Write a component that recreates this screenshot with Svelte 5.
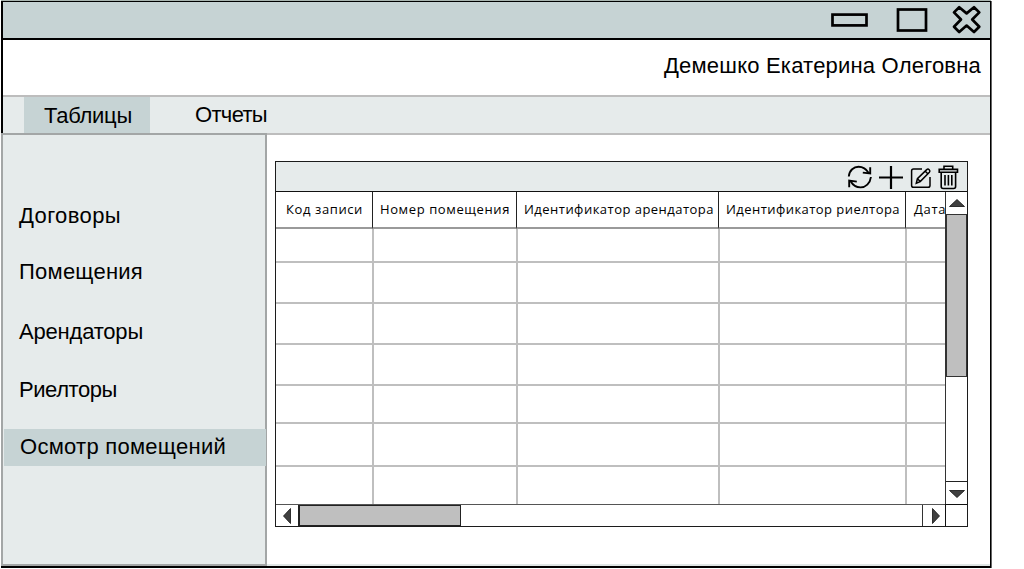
<script>
  const tabs = [
    { label: 'Таблицы', width: 88, active: true },
    { label: 'Отчеты', width: 72, active: false }
  ];

  const sections = [
    { label: 'Договоры', width: 102, height: 56 },
    { label: 'Помещения', width: 124, height: 60 },
    { label: 'Арендаторы', width: 124, height: 58 },
    { label: 'Риелторы', width: 98, height: 52 },
    { label: 'Осмотр помещений', width: 206, height: 37, active: true }
  ];

  const columns = [
    { label: 'Код записи', width: 77 },
    { label: 'Номер помещения', width: 130 },
    { label: 'Идентификатор арендатора', width: 190 },
    { label: 'Идентификатор риелтора', width: 174 },
    { label: 'Дата', width: 32 }
  ];

  const rows = [34, 41, 41, 41, 38, 43, 37];

  // Tracks a label out (or in) so that it takes up the given width.
  function fit(node, width) {
    const natural = node.getBoundingClientRect().width;
    const step = (width - natural) / node.textContent.length;
    node.style.letterSpacing = `${step}px`;
  }
</script>

<div class="window">
  <header class="titlebar">
    <svg class="win-icons" width="160" height="36" viewBox="0 0 160 36" fill="none" stroke="#000" stroke-width="2.7">
      <rect x="2.5" y="12.6" width="34" height="10.8" />
      <rect x="68" y="7.5" width="28" height="21" />
      <path
        stroke-linejoin="round"
        d="M129.2 5.2 L136.6 11.4 L144 5.2 L149.3 10.4 L142.2 17.5 L149.3 24.7 L144 30 L136.6 23.6 L129.2 30 L124 24.7 L131 17.5 L124 10.4 Z"
      />
    </svg>
  </header>

  <div class="user"><span use:fit={317}>Демешко Екатерина Олеговна</span></div>

  <nav class="tabs">
    {#each tabs as tab}
      <div class="tab" class:active={tab.active}><span use:fit={tab.width}>{tab.label}</span></div>
    {/each}
  </nav>

  <div class="body">
    <aside class="sidebar">
      {#each sections as item}
        <div class="item" class:active={item.active} style="height: {item.height}px">
          <span use:fit={item.width}>{item.label}</span>
        </div>
      {/each}
    </aside>

    <main class="content">
      <section class="panel">
        <div class="toolbar">
          <svg width="114" height="28" viewBox="0 0 114 28" fill="none" stroke="#000">
            <g stroke-width="1.9">
              <path d="M2.8 13.5 C3.3 7 8 3.8 12.5 3.8 C17 3.8 20.3 6 22.7 10" />
              <path d="M24.2 4.2 V10.4 L16.8 9.6" />
              <path d="M24.9 14 C24.2 20.5 19.5 24.4 14.5 24.4 C10.5 24.4 6.8 22 4.4 18" />
              <path d="M3.2 24.3 V17.6 L10.8 18.6" />
            </g>
            <path stroke-width="2.2" d="M33 14.5 H57 M45 3 V26" />
            <g stroke-width="1.5">
              <path d="M76 6 H67.5 Q65.6 6 65.6 8 V22.5 Q65.6 24.3 67.5 24.3 H82 Q84 24.3 84 22.5 V14" />
              <path d="M70.3 20.2 L71.4 15.7 L80.7 6.6 Q82 5.5 83.2 6.7 Q84.5 8 83.4 9.3 L74.2 18.6 Z M79.2 8.2 L81.8 10.8 M71.8 16 L74 18.2" />
            </g>
            <g stroke-width="1.6">
              <path d="M93.2 6.4 H111.5 V9.2 H93.2 Z M98 6.2 V3.2 H106.7 V6.2" />
              <path d="M95.2 9.3 V23.5 Q95.2 25.5 97.2 25.5 H107.6 Q109.6 25.5 109.6 23.5 V9.3" />
              <path d="M99 12 V22.5 M102.4 12 V22.5 M105.8 12 V22.5" />
            </g>
          </svg>
        </div>

        <div class="viewport">
          <div class="grid">
            {#each columns as column}
              <div class="cell head"><span use:fit={column.width}>{column.label}</span></div>
            {/each}
            {#each rows as height, i}
              {#each columns as _}
                <div class="cell" class:last={i === rows.length - 1} style="height: {height}px"></div>
              {/each}
            {/each}
          </div>

          <div class="vscroll">
            <div class="button"><svg width="16" height="8" viewBox="0 0 16 8"><path d="M0.5 7.5 L8 0.5 L15.5 7.5 Z" /></svg></div>
            <div class="thumb"></div>
            <div class="track"></div>
            <div class="button"><svg width="16" height="8" viewBox="0 0 16 8"><path d="M0.5 0.5 H15.5 L8 7.5 Z" /></svg></div>
          </div>

          <div class="hscroll">
            <div class="button"><svg width="8" height="16" viewBox="0 0 8 16"><path d="M7.5 0.5 V15.5 L0.5 8 Z" /></svg></div>
            <div class="thumb"></div>
            <div class="track"></div>
            <div class="button"><svg width="8" height="16" viewBox="0 0 8 16"><path d="M0.5 0.5 V15.5 L7.5 8 Z" /></svg></div>
          </div>
          <div class="corner"></div>
        </div>
      </section>
    </main>
  </div>
</div>

<style>
  :global(body) {
    margin: 0;
    background: #fff;
    overflow: hidden;
  }

  .window,
  .window * {
    box-sizing: border-box;
  }

  .window {
    display: flex;
    flex-direction: column;
    width: 990px;
    height: 567px;
    margin: 1px 0 0 1px;
    border: solid #000;
    border-width: 1px 1px 2px 2px;
    box-shadow: 1px 0 0 #666, 0 -1px 0 #a9b5b0;
    background: #fff;
    color: #000;
    font: 22px/26px 'Liberation Sans', Arial, sans-serif;
    white-space: nowrap;
  }

  .window span {
    display: inline-block;
  }

  svg {
    display: block;
    flex: none;
  }

  .titlebar {
    display: flex;
    justify-content: flex-end;
    flex: none;
    height: 38px;
    border-bottom: 2px solid #000;
    background: #c6d3d4;
  }

  .user {
    display: flex;
    justify-content: flex-end;
    flex: none;
    height: 55px;
    padding: 13px 9px 0 0;
  }

  .tabs {
    display: flex;
    flex: none;
    height: 40px;
    padding-left: 21px;
    border: solid #bdbdbd;
    border-width: 2px 0;
    background: #e6ebeb;
  }

  .tab {
    padding: 5px 0 0 45px;
  }

  .tab.active {
    width: 126px;
    padding: 6px 0 0 20px;
    background: #c6d3d4;
  }

  .body {
    display: flex;
    flex: 1;
    min-height: 0;
  }

  .sidebar {
    width: 266px;
    flex: none;
    margin: -2px 0 0 -2px;
    padding-top: 68px;
    border: 2px solid #a3a6a6;
    background: #e6ebeb;
    z-index: 1;
  }

  .item {
    padding: 0 0 0 16px;
  }

  .item.active {
    margin-right: -1px;
    margin-left: 1px;
    padding: 5px 0 0 16px;
    background: #c6d3d4;
  }

  .content {
    flex: 1;
    padding: 26px 0 0 8px;
    border-bottom: 2px solid #dfe6e5;
  }

  .panel {
    width: 693px;
    border: 1px solid #1c1c1c;
  }

  .toolbar {
    display: flex;
    justify-content: flex-end;
    height: 30px;
    padding: 1px 7px 0 0;
    border-bottom: 1px solid #111;
    background: #e6ebeb;
  }

  .viewport {
    display: grid;
    grid-template-columns: 669px 22px;
    grid-template-rows: 312px 22px;
  }

  .grid {
    display: grid;
    grid-template-columns: 98px 144px 202px 187px 100px;
    grid-template-rows: 37px repeat(7, auto);
    align-content: start;
    overflow: hidden;
  }

  .cell {
    border: solid #bfbfbf;
    border-width: 0 2px 2px 0;
  }

  .cell.last {
    border-bottom: 0;
  }

  .cell.head {
    margin-right: 1px;
    margin-left: -1px;
    padding: 8px 0 0 11px;
    border-right: 1px solid #222;
    border-bottom-color: #9a9a9a;
    font: 13px/18px 'Open Sans', 'Noto Sans', sans-serif;
  }

  .cell.head:nth-child(n + 2) {
    padding-left: 7px;
  }

  .cell.head:nth-child(5) {
    padding-left: 8px;
  }

  .vscroll {
    display: flex;
    flex-direction: column;
    border-left: 1px solid #333;
  }

  .hscroll {
    display: flex;
    border-top: 1px solid #555;
  }

  .button {
    display: flex;
    align-items: center;
    justify-content: center;
    flex: none;
    background: #fff;
  }

  .button path {
    fill: #404040;
    stroke: #111;
    stroke-width: 0.8;
  }

  .vscroll .button {
    height: 22px;
  }

  .vscroll .button:last-child {
    height: 23px;
    padding-top: 2px;
    border-top: 1px solid #222;
  }

  .vscroll .thumb {
    height: 163px;
    border: 1px solid #333;
    background: #bfbfbf;
  }

  .hscroll .button {
    width: 22px;
  }

  .hscroll .button:last-child {
    width: 23px;
    padding-left: 4px;
    border-left: 1px solid #333;
  }

  .hscroll .thumb {
    width: 163px;
    border: 1px solid #222;
    border-left-width: 2px;
    background: #bfbfbf;
  }

  .track {
    flex: 1;
  }

  .corner {
    border: solid #111;
    border-width: 1px 0 0 1px;
  }
</style>
